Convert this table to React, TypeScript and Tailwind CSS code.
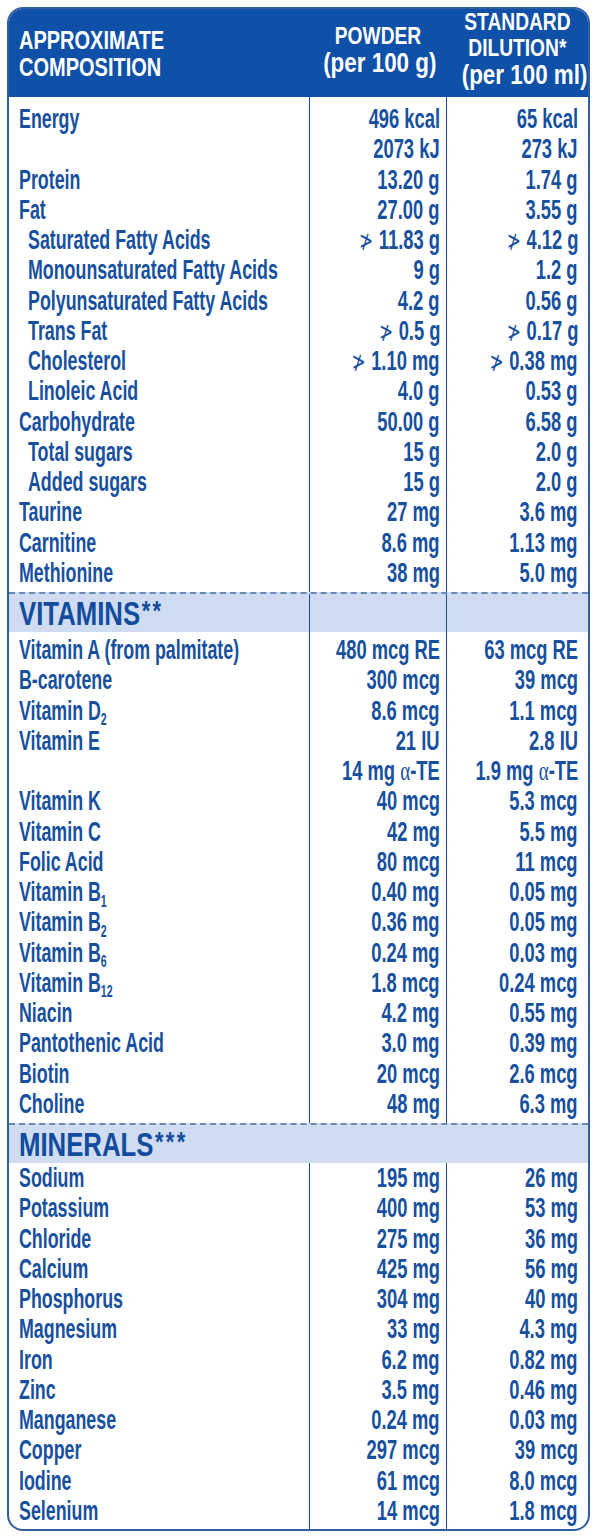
type Row = {
  label: string;
  sub?: string;
  indent?: boolean;
  powder: string;
  dilution: string;
};

const general: Row[] = [
  { label: "Energy", powder: "496 kcal", dilution: "65 kcal" },
  { label: "", powder: "2073 kJ", dilution: "273 kJ" },
  { label: "Protein", powder: "13.20 g", dilution: "1.74 g" },
  { label: "Fat", powder: "27.00 g", dilution: "3.55 g" },
  { label: "Saturated Fatty Acids", indent: true, powder: "≯ 11.83 g", dilution: "≯ 4.12 g" },
  { label: "Monounsaturated Fatty Acids", indent: true, powder: "9 g", dilution: "1.2 g" },
  { label: "Polyunsaturated Fatty Acids", indent: true, powder: "4.2 g", dilution: "0.56 g" },
  { label: "Trans Fat", indent: true, powder: "≯ 0.5 g", dilution: "≯ 0.17 g" },
  { label: "Cholesterol", indent: true, powder: "≯ 1.10 mg", dilution: "≯ 0.38 mg" },
  { label: "Linoleic Acid", indent: true, powder: "4.0 g", dilution: "0.53 g" },
  { label: "Carbohydrate", powder: "50.00 g", dilution: "6.58 g" },
  { label: "Total sugars", indent: true, powder: "15 g", dilution: "2.0 g" },
  { label: "Added sugars", indent: true, powder: "15 g", dilution: "2.0 g" },
  { label: "Taurine", powder: "27 mg", dilution: "3.6 mg" },
  { label: "Carnitine", powder: "8.6 mg", dilution: "1.13 mg" },
  { label: "Methionine", powder: "38 mg", dilution: "5.0 mg" },
];

const vitamins: Row[] = [
  { label: "Vitamin A (from palmitate)", powder: "480 mcg RE", dilution: "63 mcg RE" },
  { label: "B-carotene", powder: "300 mcg", dilution: "39 mcg" },
  { label: "Vitamin D", sub: "2", powder: "8.6 mcg", dilution: "1.1 mcg" },
  { label: "Vitamin E", powder: "21 IU", dilution: "2.8 IU" },
  { label: "", powder: "14 mg α-TE", dilution: "1.9 mg α-TE" },
  { label: "Vitamin K", powder: "40 mcg", dilution: "5.3 mcg" },
  { label: "Vitamin C", powder: "42 mg", dilution: "5.5 mg" },
  { label: "Folic Acid", powder: "80 mcg", dilution: "11 mcg" },
  { label: "Vitamin B", sub: "1", powder: "0.40 mg", dilution: "0.05 mg" },
  { label: "Vitamin B", sub: "2", powder: "0.36 mg", dilution: "0.05 mg" },
  { label: "Vitamin B", sub: "6", powder: "0.24 mg", dilution: "0.03 mg" },
  { label: "Vitamin B", sub: "12", powder: "1.8 mcg", dilution: "0.24 mcg" },
  { label: "Niacin", powder: "4.2 mg", dilution: "0.55 mg" },
  { label: "Pantothenic Acid", powder: "3.0 mg", dilution: "0.39 mg" },
  { label: "Biotin", powder: "20 mcg", dilution: "2.6 mcg" },
  { label: "Choline", powder: "48 mg", dilution: "6.3 mg" },
];

const minerals: Row[] = [
  { label: "Sodium", powder: "195 mg", dilution: "26 mg" },
  { label: "Potassium", powder: "400 mg", dilution: "53 mg" },
  { label: "Chloride", powder: "275 mg", dilution: "36 mg" },
  { label: "Calcium", powder: "425 mg", dilution: "56 mg" },
  { label: "Phosphorus", powder: "304 mg", dilution: "40 mg" },
  { label: "Magnesium", powder: "33 mg", dilution: "4.3 mg" },
  { label: "Iron", powder: "6.2 mg", dilution: "0.82 mg" },
  { label: "Zinc", powder: "3.5 mg", dilution: "0.46 mg" },
  { label: "Manganese", powder: "0.24 mg", dilution: "0.03 mg" },
  { label: "Copper", powder: "297 mcg", dilution: "39 mcg" },
  { label: "Iodine", powder: "61 mcg", dilution: "8.0 mcg" },
  { label: "Selenium", powder: "14 mcg", dilution: "1.8 mcg" },
];

// the label font is a narrow grotesque; squeeze Liberation Sans to match
function Value({ text }: { text: string }) {
  const notMore = text.startsWith("≯ ");
  const rest = notMore ? text.slice(2) : text;
  const alpha = rest.indexOf("α");
  return (
    <span className="inline-block shrink-0 origin-right scale-x-[0.68] whitespace-nowrap">
      {notMore && (
        <span className="font-['DejaVu_Sans',sans-serif] text-[25px] font-normal mr-[8px]">
          ≯
        </span>
      )}
      {alpha >= 0 ? (
        <>
          {rest.slice(0, alpha)}
          <span className="font-['Liberation_Serif',serif] font-normal text-[28px]">α</span>
          {rest.slice(alpha + 1)}
        </>
      ) : (
        rest
      )}
    </span>
  );
}

function Label({ row }: { row: Row }) {
  return (
    <span className="inline-block origin-left scale-x-[0.66] whitespace-nowrap">
      {row.label}
      {row.sub && (
        <sub className="text-[16px] font-bold bottom-[-0.35em]">{row.sub}</sub>
      )}
    </span>
  );
}

function Section({ rows, pt, pb }: { rows: Row[]; pt: string; pb: string }) {
  return (
    <div className="grid grid-cols-[300px_137px_minmax(0,1fr)] text-[27px] font-bold leading-[30.25px] text-[#17509e]">
      <div className={`${pt} ${pb} min-w-0`}>
        {rows.map((r, i) => (
          <div key={i} className={`h-[30.25px] ${r.indent ? "pl-[19px]" : "pl-[10px]"}`}>
            <Label row={r} />
          </div>
        ))}
      </div>
      <div className={`${pt} ${pb} min-w-0 border-l-[1.5px] border-[#1d4f96]`}>
        {rows.map((r, i) => (
          <div key={i} className="h-[30.25px] flex justify-end pr-[6px]">
            <Value text={r.powder} />
          </div>
        ))}
      </div>
      <div className={`${pt} ${pb} min-w-0 border-l-[1.5px] border-[#1d4f96]`}>
        {rows.map((r, i) => (
          <div key={i} className="h-[30.25px] flex justify-end pr-[10px]">
            <Value text={r.dilution} />
          </div>
        ))}
      </div>
    </div>
  );
}

function Band({ title, stars, dividers }: { title: string; stars: string; dividers?: boolean }) {
  return (
    <div className="grid grid-cols-[300px_137px_minmax(0,1fr)] h-[40px] bg-[#cfdcf1] border-t-2 border-dashed border-[#6d88b3]">
      <div className="pl-[10px] flex items-center">
        <span className="inline-block origin-left scale-x-[0.78] whitespace-nowrap text-[33px] font-bold text-[#124c9e] leading-none">
          {title}
          <span className="text-[28px] align-top tracking-[3px] ml-[2px]">{stars}</span>
        </span>
      </div>
      <div className={dividers ? "border-l-[1.5px] border-[#1d4f96]" : ""} />
      <div className={dividers ? "border-l-[1.5px] border-[#1d4f96]" : ""} />
    </div>
  );
}

function HeadLine({ text, big }: { text: string; big?: boolean }) {
  return (
    <div className={big ? "text-[28px] leading-[28px]" : "text-[24px] leading-[26px]"}>
      <span className="inline-block scale-x-[0.8] whitespace-nowrap">{text}</span>
    </div>
  );
}

export default function App() {
  return (
    <div className="w-[597px] min-h-[1536px] bg-white pt-[7px] font-['Liberation_Sans',Arial,sans-serif]">
      <div className="mx-[7px] w-[583px] border-2 border-[#2f5ea3] rounded-[16px] overflow-hidden">
        <div className="grid grid-cols-[300px_137px_minmax(0,1fr)] h-[88px] bg-[#0f50a8] text-white font-bold">
          <div className="pl-[10px] pt-[18px]">
            <div className="text-[25px] leading-[27px]">
              <span className="inline-block origin-left scale-x-[0.8] whitespace-nowrap">APPROXIMATE</span>
            </div>
            <div className="text-[25px] leading-[27px]">
              <span className="inline-block origin-left scale-x-[0.8] whitespace-nowrap">COMPOSITION</span>
            </div>
          </div>
          <div className="text-center pt-[14px]">
            <HeadLine text="POWDER" />
            <HeadLine text="(per 100 g)" big />
          </div>
          <div className="text-center">
            <HeadLine text="STANDARD" />
            <HeadLine text="DILUTION*" />
            <HeadLine text="(per 100 ml)" big />
          </div>
        </div>
        <Section rows={general} pt="pt-[7px]" pb="pb-[4px]" />
        <Band title="VITAMINS" stars="**" dividers />
        <Section rows={vitamins} pt="pt-[3px]" pb="pb-[4px]" />
        <Band title="MINERALS" stars="***" />
        <Section rows={minerals} pt="pt-0" pb="pb-[3px]" />
      </div>
    </div>
  );
}
